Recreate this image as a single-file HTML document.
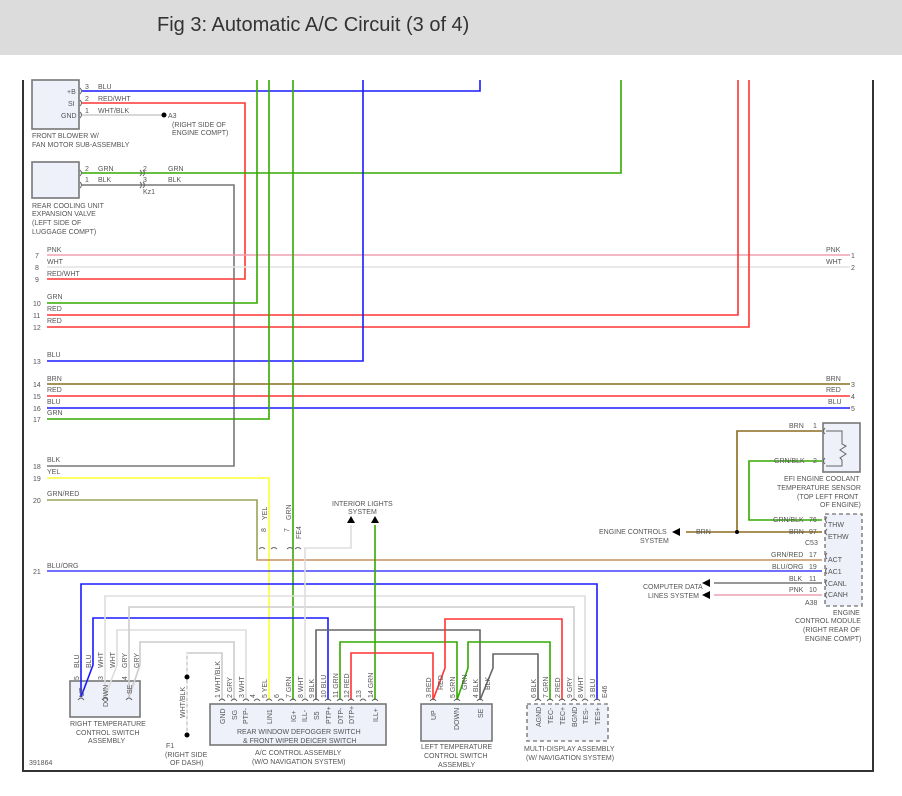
<!DOCTYPE html><html><head><style>
body{margin:0;background:#fff;width:902px;height:796px;overflow:hidden;font-family:"Liberation Sans",sans-serif}
#hd{position:absolute;left:0;top:0;width:902px;height:55px;background:#dcdcdc}
#hd span{position:absolute;left:157px;top:14px;font-size:20px;color:#333}
svg{position:absolute;left:0;top:0}
text{font-family:"Liberation Sans",sans-serif;font-size:7px;fill:#555}
</style></head><body>
<div id="hd"><span>Fig 3: Automatic A/C Circuit (3 of 4)</span></div>
<svg width="902" height="796" viewBox="0 0 902 796" fill="none" stroke-width="1.6">
<!-- frame -->
<polyline points="23,80 23,771 873,771 873,80" stroke="#333" stroke-width="2"/>
<!-- components -->
<rect x="32" y="80" width="47" height="49" fill="#eef0fa" stroke="#777"/>
<rect x="32" y="162" width="47" height="36" fill="#eef0fa" stroke="#777"/>
<rect x="70" y="681" width="70" height="36" fill="#eef0fa" stroke="#777"/>
<rect x="210" y="704" width="176" height="41" fill="#eef0fa" stroke="#777"/>
<rect x="421" y="704" width="71" height="37" fill="#eef0fa" stroke="#777"/>
<rect x="527" y="704" width="81" height="37" fill="#eef0fa" stroke="#888" stroke-dasharray="4,3"/>
<rect x="823" y="423" width="37" height="49" fill="#eef0fa" stroke="#777"/>
<rect x="825" y="514" width="37" height="92" fill="#eef0fa" stroke="#888" stroke-dasharray="4,3"/>
<polyline points="826,431 842,431 842,444 846,446 840,450 846,454 840,458 842,460 842,466 826,466" stroke="#666" stroke-width="1"/>
<!-- wires -->
<g stroke-linejoin="miter">
<polyline points="82,91 480,91 480,80" stroke="#1a1aff"/>
<polyline points="82,103 245,103 245,279 47,279" stroke="#ff3333"/>
<polyline points="82,115 163,115" stroke="#ccc"/>
<polyline points="82,173 621,173 621,80" stroke="#33aa00"/>
<polyline points="82,185 234,185 234,466 47,466" stroke="#777"/>
<line x1="47" y1="255" x2="850" y2="255" stroke="#f0a0b0"/>
<line x1="47" y1="267" x2="850" y2="267" stroke="#e2e2e2"/>
<polyline points="47,303 257,303 257,80" stroke="#33aa00"/>
<polyline points="47,315 738,315 738,80" stroke="#ff3333"/>
<polyline points="47,327 749,327 749,80" stroke="#ff3333"/>
<polyline points="47,361 363,361 363,80" stroke="#1a1aff"/>
<line x1="47" y1="384" x2="850" y2="384" stroke="#8b6c1e"/>
<line x1="47" y1="396" x2="850" y2="396" stroke="#ff3333"/>
<line x1="47" y1="408" x2="850" y2="408" stroke="#1a1aff"/>
<polyline points="47,419 269,419 269,80" stroke="#33aa00"/>
<line x1="293" y1="80" x2="293" y2="700" stroke="#33aa00"/>
<polyline points="47,478 269,478 269,700" stroke="#ffff33"/>
<polyline points="47,500 257,500 257,560 822,560" stroke="#c89060"/>
<polyline points="47,500 257,500 257,560" stroke="#7cb050" stroke-width="1"/>
<line x1="47" y1="571" x2="822" y2="571" stroke="#1a1aff" stroke-width="1.2"/>
<!-- bottom harness -->
<polyline points="81,697 81,584 597,584 597,700" stroke="#1a1aff"/>
<polyline points="81,697 93,665 93,618 328,618 328,700" stroke="#1a1aff"/>
<polyline points="105,697 105,596 585,596 585,700" stroke="#ddd"/>
<polyline points="105,697 117,665 117,630 246,630 246,700" stroke="#ddd"/>
<polyline points="129,697 129,607 574,607 574,700" stroke="#ccc"/>
<polyline points="129,697 140,665 140,642 234,642 234,700" stroke="#ccc"/>
<polyline points="187,735 187,653 222,653 222,700" stroke="#ccc"/>
<polyline points="305,700 305,548 351,548 351,525" stroke="#ddd"/>
<line x1="375" y1="700" x2="375" y2="525" stroke="#33aa00"/>
<polyline points="316,700 316,630 480,630 480,700" stroke="#666"/>
<polyline points="340,700 340,642 457,642 457,700" stroke="#33aa00"/>
<polyline points="351,700 351,653 433,653 433,700" stroke="#ff3333"/>
<polyline points="433,700 445,668 445,619 562,619 562,700" stroke="#ff3333"/>
<polyline points="457,700 468,668 468,642 550,642 550,700" stroke="#33aa00"/>
<polyline points="480,700 493,668 493,654 538,654 538,700" stroke="#666"/>
<!-- engine side -->
<polyline points="686,532 822,532" stroke="#8b6c1e"/>
<polyline points="737,532 737,431 822,431" stroke="#8b6c1e"/>
<polyline points="822,520 749,520 749,461 822,461" stroke="#33aa00"/>
<line x1="714" y1="583" x2="822" y2="583" stroke="#777"/>
<line x1="714" y1="595" x2="822" y2="595" stroke="#f0a0b0"/>
</g>
<line x1="187" y1="653" x2="187" y2="735" stroke="#fff" stroke-width="1" stroke-dasharray="3,3"/>
<g fill="#000" stroke="none">
<circle cx="164" cy="115" r="2.5"/><circle cx="737" cy="532" r="2"/>
<circle cx="187" cy="677" r="2.5"/><circle cx="187" cy="735" r="2.5"/>
<polygon points="672,532 680,528 680,536"/><polygon points="702,583 710,579 710,587"/><polygon points="702,595 710,591 710,599"/>
<polygon points="351,516 347,523 355,523"/><polygon points="375,516 371,523 379,523"/>
</g>
<!-- connector arcs -->
<g stroke="#666" stroke-width="1">
<path d="M80,88 q3,3 0,6 M80,100 q3,3 0,6 M80,112 q3,3 0,6 M80,170 q3,3 0,6 M80,182 q3,3 0,6"/>
<path d="M140,170 q3,3 0,6 M143,170 q3,3 0,6 M140,182 q3,3 0,6 M143,182 q3,3 0,6"/>
<path d="M825,428 q-3,3 0,6 M825,458 q-3,3 0,6 M827,517 q-3,3 0,6 M827,529 q-3,3 0,6 M827,553 q-3,3 0,6 M827,568 q-3,3 0,6 M827,580 q-3,3 0,6 M827,592 q-3,3 0,6"/>
<path d="M259,549 q3,-3 6,0 M271,549 q3,-3 6,0 M287,549 q3,-3 6,0 M295,549 q3,-3 6,0"/>
<path d="M78,700 q3,-4 6,0 M102,700 q3,-4 6,0 M126,700 q3,-4 6,0 M219,701 q3,-4 6,0 M231,701 q3,-4 6,0 M243,701 q3,-4 6,0 M254,701 q3,-4 6,0 M266,701 q3,-4 6,0 M278,701 q3,-4 6,0 M290,701 q3,-4 6,0 M302,701 q3,-4 6,0 M313,701 q3,-4 6,0 M325,701 q3,-4 6,0 M337,701 q3,-4 6,0 M348,701 q3,-4 6,0 M360,701 q3,-4 6,0 M372,701 q3,-4 6,0 M430,701 q3,-4 6,0 M454,701 q3,-4 6,0 M477,701 q3,-4 6,0 M535,701 q3,-4 6,0 M547,701 q3,-4 6,0 M559,701 q3,-4 6,0 M571,701 q3,-4 6,0 M582,701 q3,-4 6,0 M594,701 q3,-4 6,0"/>
</g>
<!-- texts -->
<g>
<text x="67" y="94">+B</text><text x="68" y="106">SI</text><text x="61" y="118">GND</text>
<text x="85" y="89">3</text><text x="98" y="89">BLU</text><text x="85" y="101">2</text><text x="98" y="101">RED/WHT</text><text x="85" y="113">1</text><text x="98" y="113">WHT/BLK</text>
<text x="168" y="118">A3</text><text x="172" y="127">(RIGHT SIDE OF</text><text x="172" y="135">ENGINE COMPT)</text>
<text x="32" y="138">FRONT BLOWER W/</text><text x="32" y="147">FAN MOTOR SUB-ASSEMBLY</text>
<text x="85" y="171">2</text><text x="98" y="171">GRN</text><text x="85" y="182">1</text><text x="98" y="182">BLK</text>
<text x="143" y="171">2</text><text x="168" y="171">GRN</text><text x="143" y="182">3</text><text x="168" y="182">BLK</text><text x="143" y="194">Kz1</text>
<text x="32" y="208">REAR COOLING UNIT</text><text x="32" y="216">EXPANSION VALVE</text><text x="32" y="225">(LEFT SIDE OF</text><text x="32" y="234">LUGGAGE COMPT)</text>
<text x="35" y="258">7</text><text x="47" y="252">PNK</text><text x="35" y="270">8</text><text x="47" y="264">WHT</text><text x="35" y="282">9</text><text x="47" y="276">RED/WHT</text>
<text x="33" y="306">10</text><text x="47" y="299">GRN</text><text x="33" y="318">11</text><text x="47" y="311">RED</text><text x="33" y="330">12</text><text x="47" y="323">RED</text>
<text x="33" y="364">13</text><text x="47" y="357">BLU</text>
<text x="33" y="387">14</text><text x="47" y="381">BRN</text><text x="33" y="399">15</text><text x="47" y="392">RED</text><text x="33" y="411">16</text><text x="47" y="404">BLU</text><text x="33" y="422">17</text><text x="47" y="415">GRN</text>
<text x="33" y="469">18</text><text x="47" y="462">BLK</text><text x="33" y="481">19</text><text x="47" y="474">YEL</text><text x="33" y="503">20</text><text x="47" y="496">GRN/RED</text><text x="33" y="574">21</text><text x="47" y="568">BLU/ORG</text>
<text x="826" y="252">PNK</text><text x="851" y="258">1</text><text x="826" y="264">WHT</text><text x="851" y="270">2</text>
<text x="826" y="381">BRN</text><text x="851" y="387">3</text><text x="826" y="392">RED</text><text x="851" y="399">4</text><text x="828" y="404">BLU</text><text x="851" y="411">5</text>
<text x="789" y="428">BRN</text><text x="813" y="428">1</text><text x="774" y="463">GRN/BLK</text><text x="813" y="463">2</text>
<text x="784" y="481">EFI ENGINE COOLANT</text><text x="777" y="490">TEMPERATURE SENSOR</text><text x="797" y="499">(TOP LEFT FRONT</text><text x="820" y="507">OF ENGINE)</text>
<text x="773" y="522">GRN/BLK</text><text x="809" y="522">76</text><text x="789" y="534">BRN</text><text x="809" y="534">97</text><text x="805" y="545">C53</text>
<text x="828" y="527">THW</text><text x="828" y="539">ETHW</text>
<text x="771" y="557">GRN/RED</text><text x="809" y="557">17</text><text x="772" y="569">BLU/ORG</text><text x="809" y="569">19</text>
<text x="789" y="581">BLK</text><text x="809" y="581">11</text><text x="789" y="592">PNK</text><text x="809" y="592">10</text><text x="805" y="605">A38</text>
<text x="828" y="562">ACT</text><text x="828" y="574">AC1</text><text x="828" y="586">CANL</text><text x="828" y="597">CANH</text>
<text x="833" y="615">ENGINE</text><text x="795" y="623">CONTROL MODULE</text><text x="803" y="632">(RIGHT REAR OF</text><text x="805" y="641">ENGINE COMPT)</text>
<text x="599" y="534">ENGINE CONTROLS</text><text x="640" y="543">SYSTEM</text><text x="696" y="534">BRN</text>
<text x="643" y="589">COMPUTER DATA</text><text x="648" y="598">LINES SYSTEM</text>
<text x="332" y="506">INTERIOR LIGHTS</text><text x="348" y="514">SYSTEM</text>
<text x="70" y="726">RIGHT TEMPERATURE</text><text x="76" y="735">CONTROL SWITCH</text><text x="88" y="743">ASSEMBLY</text>
<text x="166" y="748">F1</text><text x="165" y="757">(RIGHT SIDE</text><text x="170" y="765">OF DASH)</text>
<text x="237" y="734">REAR WINDOW DEFOGGER SWITCH</text><text x="243" y="743">&amp; FRONT WIPER DEICER SWITCH</text>
<text x="255" y="755">A/C CONTROL ASSEMBLY</text><text x="252" y="764">(W/O NAVIGATION SYSTEM)</text>
<text x="421" y="749">LEFT TEMPERATURE</text><text x="424" y="758">CONTROL SWITCH</text><text x="438" y="767">ASSEMBLY</text>
<text x="524" y="751">MULTI-DISPLAY ASSEMBLY</text><text x="526" y="760">(W/ NAVIGATION SYSTEM)</text>
<text x="29" y="765">391864</text>
</g>
<!-- vertical texts -->
<g>
<g transform="translate(267,520) rotate(-90)"><text>YEL</text></g>
<g transform="translate(291,520) rotate(-90)"><text>GRN</text></g>
<g transform="translate(266,532) rotate(-90)"><text>8</text></g>
<g transform="translate(289,532) rotate(-90)"><text>7</text></g>
<g transform="translate(301,539) rotate(-90)"><text>FE4</text></g>
<g transform="translate(185,718) rotate(-90)"><text>WHT/BLK</text></g>
<g transform="translate(79,668) rotate(-90)"><text>BLU</text></g><g transform="translate(91,668) rotate(-90)"><text>BLU</text></g>
<g transform="translate(103,668) rotate(-90)"><text>WHT</text></g><g transform="translate(115,668) rotate(-90)"><text>WHT</text></g>
<g transform="translate(127,668) rotate(-90)"><text>GRY</text></g><g transform="translate(139,668) rotate(-90)"><text>GRY</text></g>
<g transform="translate(79,680) rotate(-90)"><text>5</text></g><g transform="translate(103,680) rotate(-90)"><text>3</text></g><g transform="translate(127,680) rotate(-90)"><text>4</text></g>
<g transform="translate(84,697) rotate(-90)"><text>UP</text></g><g transform="translate(108,707) rotate(-90)"><text>DOWN</text></g><g transform="translate(132,694) rotate(-90)"><text>SE</text></g>
<g transform="translate(220,698) rotate(-90)"><text>1 WHT/BLK</text></g>
<g transform="translate(232,698) rotate(-90)"><text>2  GRY</text></g>
<g transform="translate(244,698) rotate(-90)"><text>3  WHT</text></g>
<g transform="translate(255,698) rotate(-90)"><text>4</text></g>
<g transform="translate(267,698) rotate(-90)"><text>5   YEL</text></g>
<g transform="translate(279,698) rotate(-90)"><text>6</text></g>
<g transform="translate(291,698) rotate(-90)"><text>7  GRN</text></g>
<g transform="translate(303,698) rotate(-90)"><text>8  WHT</text></g>
<g transform="translate(314,698) rotate(-90)"><text>9  BLK</text></g>
<g transform="translate(326,698) rotate(-90)"><text>10 BLU</text></g>
<g transform="translate(338,698) rotate(-90)"><text>11 GRN</text></g>
<g transform="translate(349,698) rotate(-90)"><text>12 RED</text></g>
<g transform="translate(361,698) rotate(-90)"><text>13</text></g>
<g transform="translate(373,698) rotate(-90)"><text>14 GRN</text></g>
<g transform="translate(225,724) rotate(-90)"><text>GND</text></g>
<g transform="translate(237,720) rotate(-90)"><text>SG</text></g>
<g transform="translate(248,724) rotate(-90)"><text>PTP-</text></g>
<g transform="translate(272,724) rotate(-90)"><text>LIN1</text></g>
<g transform="translate(296,722) rotate(-90)"><text>IG+</text></g>
<g transform="translate(307,722) rotate(-90)"><text>ILL-</text></g>
<g transform="translate(319,720) rotate(-90)"><text>S5</text></g>
<g transform="translate(331,724) rotate(-90)"><text>PTP+</text></g>
<g transform="translate(343,724) rotate(-90)"><text>DTP-</text></g>
<g transform="translate(354,724) rotate(-90)"><text>DTP+</text></g>
<g transform="translate(378,722) rotate(-90)"><text>ILL+</text></g>
<g transform="translate(431,698) rotate(-90)"><text>3   RED</text></g><g transform="translate(443,690) rotate(-90)"><text>RED</text></g>
<g transform="translate(455,698) rotate(-90)"><text>5  GRN</text></g><g transform="translate(467,690) rotate(-90)"><text>GRN</text></g>
<g transform="translate(478,698) rotate(-90)"><text>4  BLK</text></g><g transform="translate(490,690) rotate(-90)"><text>BLK</text></g>
<g transform="translate(436,720) rotate(-90)"><text>UP</text></g><g transform="translate(459,730) rotate(-90)"><text>DOWN</text></g><g transform="translate(483,718) rotate(-90)"><text>SE</text></g>
<g transform="translate(536,698) rotate(-90)"><text>6  BLK</text></g>
<g transform="translate(548,698) rotate(-90)"><text>7  GRN</text></g>
<g transform="translate(560,698) rotate(-90)"><text>2  RED</text></g>
<g transform="translate(572,698) rotate(-90)"><text>9  GRY</text></g>
<g transform="translate(583,698) rotate(-90)"><text>8  WHT</text></g>
<g transform="translate(595,698) rotate(-90)"><text>3  BLU</text></g>
<g transform="translate(607,698) rotate(-90)"><text>E46</text></g>
<g transform="translate(541,727) rotate(-90)"><text>AGND</text></g>
<g transform="translate(553,724) rotate(-90)"><text>TEC-</text></g>
<g transform="translate(565,725) rotate(-90)"><text>TEC+</text></g>
<g transform="translate(577,727) rotate(-90)"><text>BGND</text></g>
<g transform="translate(588,724) rotate(-90)"><text>TES-</text></g>
<g transform="translate(600,725) rotate(-90)"><text>TES+</text></g>
</g>
</svg>
</body></html>
